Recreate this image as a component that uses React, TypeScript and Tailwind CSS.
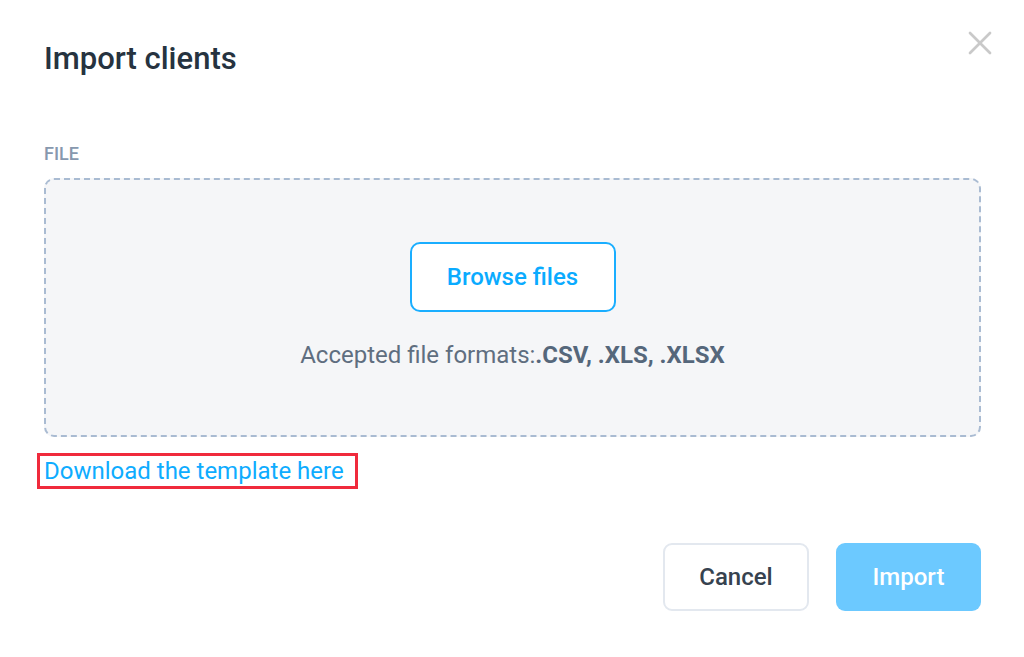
import { X } from "lucide-react";

export default function App() {
  return (
    <div className="w-[1024px] h-[657px] bg-white font-['Roboto',sans-serif] relative overflow-hidden">
      <button className="absolute right-[24px] top-[23px] text-[#c9c9c9]">
        <X className="w-[40px] h-[40px]" strokeWidth={1.6} />
      </button>

      <div className="pl-[44px] pr-[43px] pt-[39px]">
        <h1 className="text-[31px] leading-[40px] font-medium text-[#263340]">Import clients</h1>

        <p className="mt-[63px] text-[18px] leading-[24px] font-medium uppercase text-[#8798ae]">File</p>

        <div className="mt-[12px] h-[259px] rounded-[10px] border-2 border-dashed border-[#a9bbd2] bg-[#f5f6f8] flex flex-col items-center pt-[62px]">
          <button className="w-[206px] h-[70px] rounded-[10px] border-2 border-[#1aaeff] bg-white text-[24px] font-medium text-[#0aabff]">
            Browse files
          </button>
          <p className="mt-[27px] text-[24px] leading-[32px] text-[#5f6e80]">
            Accepted file formats:<span className="font-bold text-[#55677b]">.CSV, .XLS, .XLSX</span>
          </p>
        </div>

        <div className="mt-[16px] -ml-[7px] inline-block border-[3px] border-[#f02a3c] pl-[4px] pr-[11px]">
          <a href="#" className="block text-[24px] leading-[30px] text-[#0eacff]">Download the template here</a>
        </div>

        <div className="mt-[54px] flex justify-end gap-[27px]">
          <button className="w-[146px] h-[68px] rounded-[9px] border-2 border-[#e3e8ef] bg-white text-[24px] font-medium text-[#36424f]">
            Cancel
          </button>
          <button className="w-[145px] h-[68px] rounded-[9px] bg-[#6cc9ff] text-[24px] font-medium text-white">
            Import
          </button>
        </div>
      </div>
    </div>
  );
}
